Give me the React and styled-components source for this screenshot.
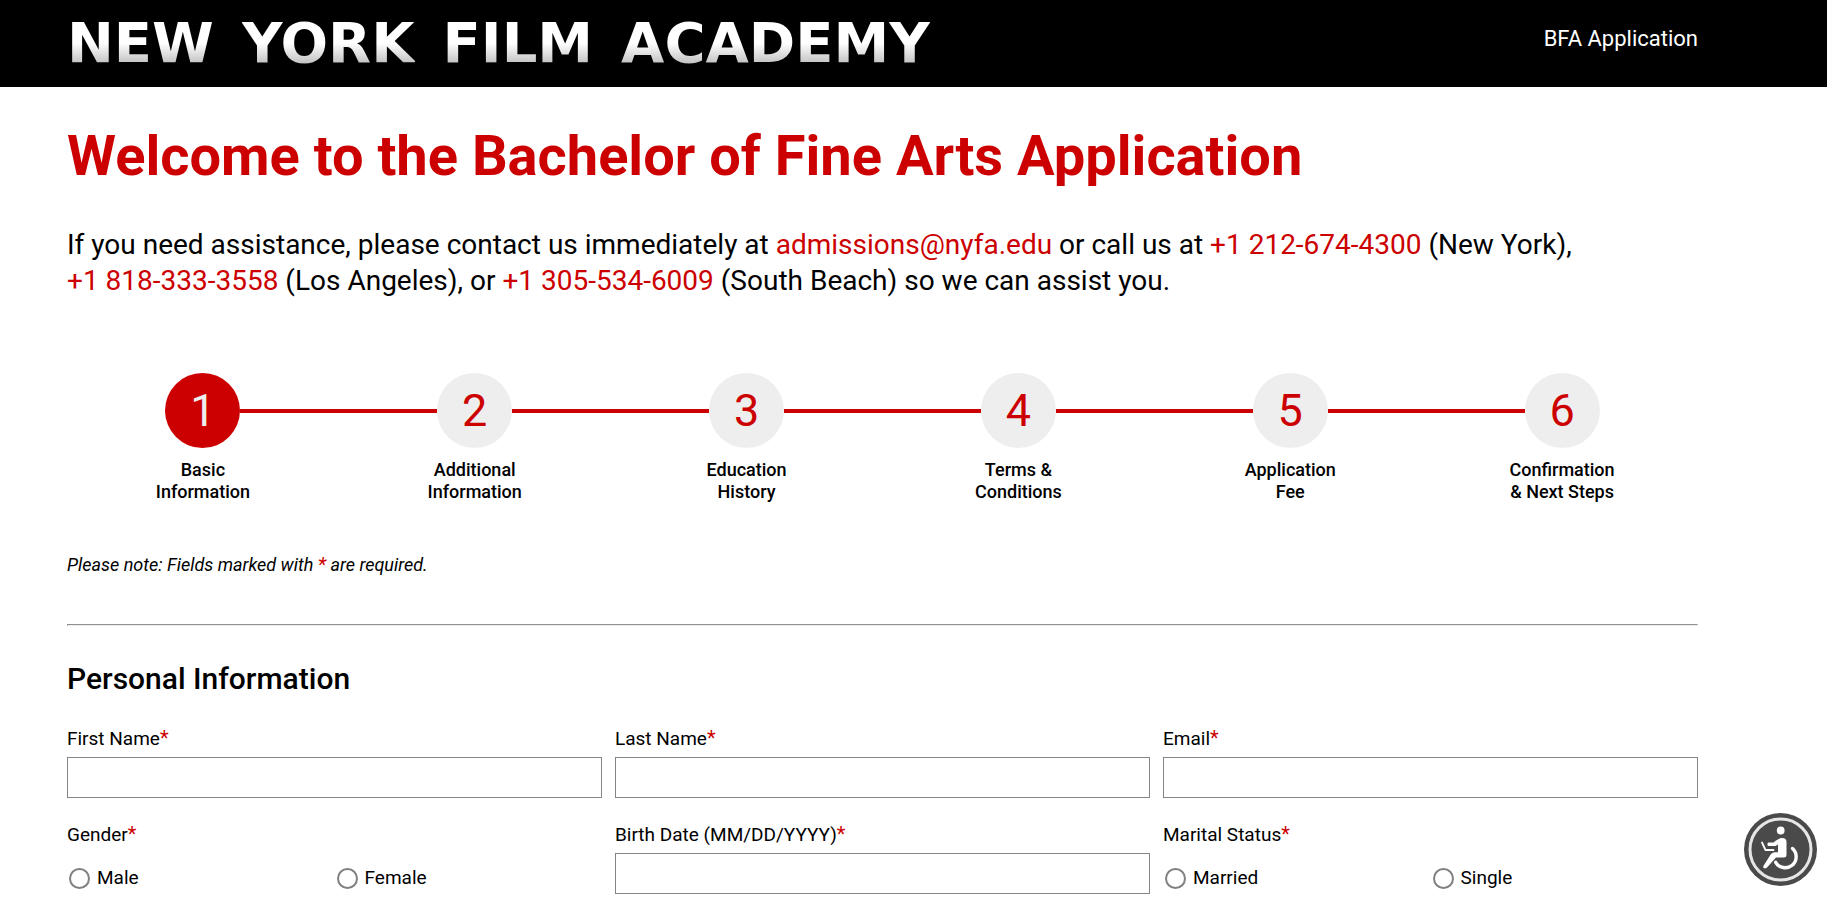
import styled, { createGlobalStyle } from "styled-components";

const GlobalStyle = createGlobalStyle`
  *, *::before, *::after {
    box-sizing: border-box;
  }

  body {
    margin: 0;
    background: #fff;
    color: #000;
    font-family: Roboto, sans-serif;
    font-size: 18px;
    line-height: 22px;
  }

  a {
    color: #c00;
    text-decoration: none;
    white-space: nowrap;
  }
`;

const Header = styled.header`
  display: flex;
  justify-content: space-between;
  align-items: flex-start;
  height: 87px;
  padding: 14px 129px 0 67px;
  background: #000;
`;

const Logo = styled.a`
  display: flex;
  gap: 28px;
  font-family: "DejaVu Sans", sans-serif;
  font-size: 56px;
  font-weight: 700;
  line-height: 58px;
`;

const LogoWord = styled.span`
  background: linear-gradient(#fff 50%, #c4c4c4 84%);
  background-clip: text;
  color: transparent;
`;

const AppName = styled.span`
  padding-top: 10px;
  color: #fff;
  font-size: 22px;
  line-height: 30px;
`;

const Page = styled.main`
  padding: 35px 129px 0 67px;
`;

const Title = styled.h1`
  margin: 0 0 37px;
  color: #c00;
  font-size: 56px;
  font-weight: 700;
  line-height: 68px;
`;

const Intro = styled.p`
  margin: 0 0 74px;
  font-size: 28px;
  line-height: 36px;
`;

const Steps = styled.ol`
  display: grid;
  grid-template-columns: repeat(6, 1fr);
  margin: 0;
  padding: 0;
  list-style: none;
`;

const Step = styled.li`
  display: flex;
  flex-direction: column;
  align-items: center;
  gap: 11px;
  text-align: center;
  font-weight: 500;
`;

const StepTrack = styled.div`
  display: flex;
  align-items: center;
  align-self: stretch;
`;

const StepLine = styled.span`
  flex: 1;
  height: 4px;
  background: ${({ $hidden }) => ($hidden ? "transparent" : "#c00")};
`;

const StepCircle = styled.span`
  width: 75px;
  height: 75px;
  border-radius: 50%;
  background: ${({ $active }) => ($active ? "#c00" : "#eee")};
  color: ${({ $active }) => ($active ? "#eee" : "#c00")};
  font-size: 45px;
  font-weight: 400;
  line-height: 75px;
`;

const StepLabel = styled.span`
  white-space: pre-line;
`;

const Note = styled.p`
  margin: 51px 0 48px;
  font-style: italic;
`;

const Star = styled.span`
  color: #c00;
  font-size: 20px;
  line-height: 1;
`;

const Divider = styled.hr`
  margin: 0 0 35px;
  border: 1px solid;
  border-color: #8f8f8f #ededed #ededed #8f8f8f;
`;

const SectionTitle = styled.h2`
  margin: 0 0 31px;
  font-size: 30px;
  font-weight: 500;
  line-height: 36px;
`;

const Fields = styled.form`
  display: grid;
  grid-template-columns: repeat(3, 1fr);
  gap: 26px 13px;
  font-size: 19px;
`;

const Field = styled.div`
  display: flex;
  flex-direction: column;
  gap: 7px;
`;

const RadioGroup = styled.fieldset`
  min-width: 0;
  margin: 0;
  padding: 0;
  border: 0;
`;

const Legend = styled.legend`
  padding: 0;
`;

const TextInput = styled.input`
  width: 100%;
  height: 41px;
  padding: 0 10px;
  border: 1px solid #858585;
  font: inherit;
`;

const RadioRow = styled.div`
  display: grid;
  grid-template-columns: 1fr 1fr;
  padding-top: 21px;
`;

const RadioLabel = styled.label`
  display: flex;
  align-items: center;
  gap: 7px;
`;

const Radio = styled.input`
  appearance: none;
  width: 21px;
  height: 21px;
  margin: 0 0 0 2px;
  border: 2px solid #808080;
  border-radius: 50%;
  background: #fff;

  &:checked {
    border-color: #c00;
    background: radial-gradient(#c00 50%, #fff 55%);
  }
`;

const AccessButton = styled.button`
  position: fixed;
  right: 10px;
  bottom: 11px;
  width: 73px;
  height: 73px;
  padding: 0;
  border: 0;
  border-radius: 50%;
  background: none;
  cursor: pointer;

  svg {
    display: block;
  }
`;

const steps = [
  "Basic\nInformation",
  "Additional\nInformation",
  "Education\nHistory",
  "Terms &\nConditions",
  "Application\nFee",
  "Confirmation\n& Next Steps",
];

function TextField({ id, label, type = "text" }) {
  return (
    <Field>
      <label htmlFor={id}>
        {label}
        <Star>*</Star>
      </label>
      <TextInput id={id} name={id} type={type} required />
    </Field>
  );
}

function RadioField({ name, label, options }) {
  return (
    <RadioGroup>
      <Legend>
        {label}
        <Star>*</Star>
      </Legend>
      <RadioRow>
        {options.map((option) => (
          <RadioLabel key={option}>
            <Radio type="radio" name={name} value={option} />
            {option}
          </RadioLabel>
        ))}
      </RadioRow>
    </RadioGroup>
  );
}

function AccessIcon() {
  return (
    <svg width="73" height="73" viewBox="0 0 73 73" fill="none">
      <circle cx="36.5" cy="36.5" r="36.5" fill="#4b4a4b" />
      <circle cx="36.5" cy="36.5" r="30.5" stroke="#e6e6e6" strokeWidth="3" />
      <circle cx="36.7" cy="17.5" r="3.9" fill="#fff" />
      <path
        d="M32 27.5 36 25.2Q42.5 24 42.5 29V42Q42.5 44.5 39.5 44.5H32L23 54.5Q20.5 56.5 19 54L20 52 27 41Q28.5 39.3 31 39.3H34V31.5L31.5 33H24Q22.5 31 24 29.5H29.5Z"
        fill="#fff"
      />
      <path d="M18 29.5 21.5 37H29.5" stroke="#fff" strokeWidth="1.8" strokeLinecap="round" strokeLinejoin="round" />
      <path d="M48.5 35.5A11 11 0 1 1 31.7 49.3" stroke="#fff" strokeWidth="3.4" strokeLinecap="round" />
    </svg>
  );
}

function App() {
  return (
    <>
      <GlobalStyle />
      <Header>
        <Logo href="#">
          <LogoWord>NEW</LogoWord>
          <LogoWord>YORK</LogoWord>
          <LogoWord>FILM</LogoWord>
          <LogoWord>ACADEMY</LogoWord>
        </Logo>
        <AppName>BFA Application</AppName>
      </Header>
      <Page>
        <Title>Welcome to the Bachelor of Fine Arts Application</Title>
        <Intro>
          If you need assistance, please contact us immediately at{" "}
          <a href="mailto:admissions@nyfa.edu">admissions@nyfa.edu</a> or call us at{" "}
          <a href="tel:+12126744300">+1 212-674-4300</a> (New York),{" "}
          <a href="tel:+18183333558">+1 818-333-3558</a> (Los Angeles), or{" "}
          <a href="tel:+13055346009">+1 305-534-6009</a> (South Beach) so we can assist you.
        </Intro>
        <Steps>
          {steps.map((label, i) => (
            <Step key={label}>
              <StepTrack>
                <StepLine $hidden={i === 0} />
                <StepCircle $active={i === 0}>{i + 1}</StepCircle>
                <StepLine $hidden={i === steps.length - 1} />
              </StepTrack>
              <StepLabel>{label}</StepLabel>
            </Step>
          ))}
        </Steps>
        <Note>
          Please note: Fields marked with <Star>*</Star> are required.
        </Note>
        <Divider />
        <SectionTitle>Personal Information</SectionTitle>
        <Fields>
          <TextField id="firstName" label="First Name" />
          <TextField id="lastName" label="Last Name" />
          <TextField id="email" label="Email" type="email" />
          <RadioField name="gender" label="Gender" options={["Male", "Female"]} />
          <TextField id="birthDate" label="Birth Date (MM/DD/YYYY)" />
          <RadioField name="maritalStatus" label="Marital Status" options={["Married", "Single"]} />
        </Fields>
      </Page>
      <AccessButton type="button" aria-label="Accessibility">
        <AccessIcon />
      </AccessButton>
    </>
  );
}

export default App;
